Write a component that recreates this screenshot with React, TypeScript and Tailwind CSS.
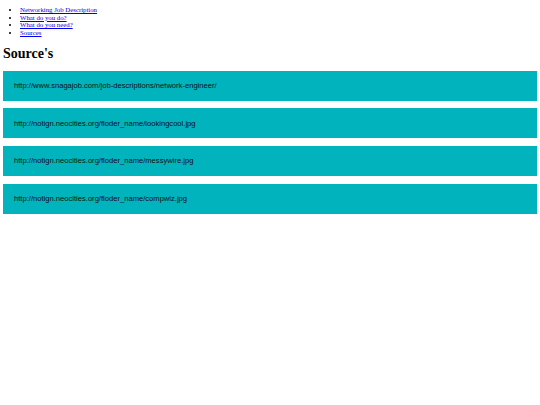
const links = ['Networking Job Description', 'What do you do?', 'What do you need?', 'Sources'];

const sources = [
  'http://www.snagajob.com/job-descriptions/network-engineer/',
  'http://notign.neocities.org/floder_name/lookingcool.jpg',
  'http://notign.neocities.org/floder_name/messywire.jpg',
  'http://notign.neocities.org/floder_name/compwiz.jpg',
];

export default function App() {
  return (
    <div className="min-h-[405px] bg-white px-[3px] pt-[6px]" style={{ fontFamily: '"Liberation Serif", serif' }}>
      <ul className="list-disc pl-[17px] text-[6.8px] leading-[7.7px]">
        {links.map((l) => (
          <li key={l}>
            <a href="#" className="text-[#0000ee] underline">
              {l}
            </a>
          </li>
        ))}
      </ul>
      <h1 className="mt-[8px] text-[14px] font-bold leading-[18px] text-black">Source's</h1>
      <div className="mt-[8px] flex flex-col gap-[7.6px]">
        {sources.map((s) => (
          <div
            key={s}
            className="flex h-[30px] items-center bg-[#00b3bd] pl-[11px] text-[7.6px] text-[#111]"
            style={{ fontFamily: '"Liberation Sans", Arial, sans-serif' }}
          >
            {s}
          </div>
        ))}
      </div>
    </div>
  );
}
